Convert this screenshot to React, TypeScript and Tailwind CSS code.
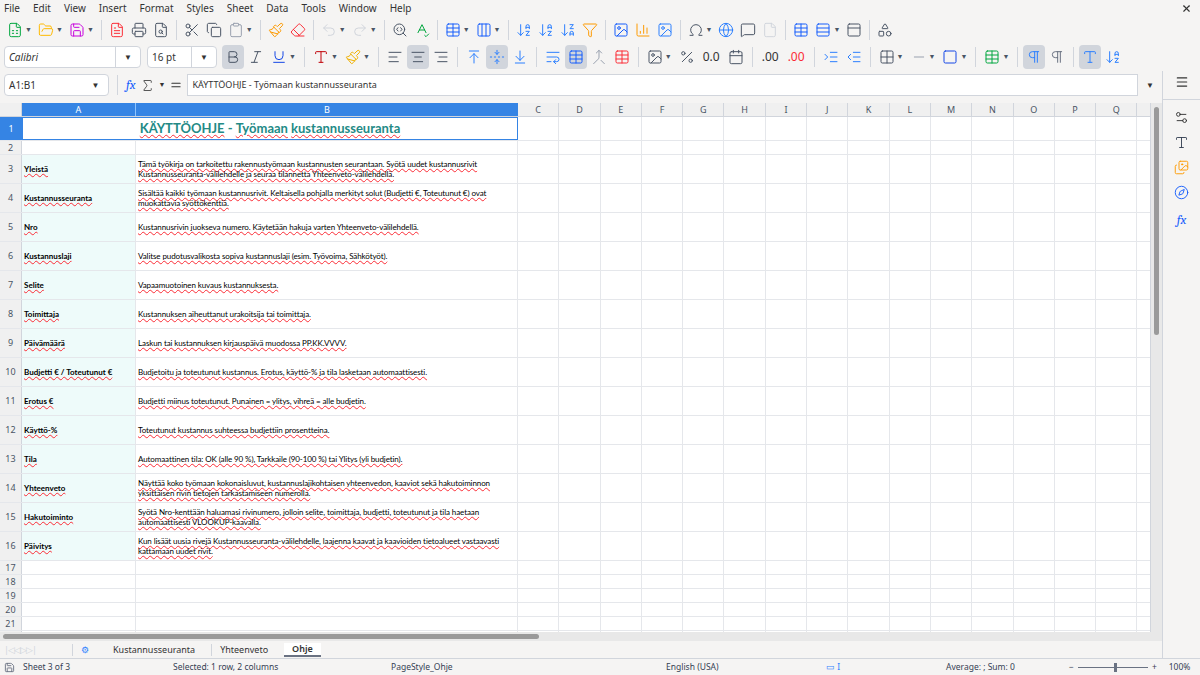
import React from "react";
import {
  FileSpreadsheet, FolderOpen, Save, FileText, Printer, FileSearch, Scissors, Copy, Clipboard, Paintbrush, Eraser,
  Undo2, Redo2, SearchCode, SpellCheck, Table, Columns3, ArrowDownAZ, ArrowDownZA, Filter, Image, BarChart3, Omega,
  Globe, MessageSquare, File, Rows3, PanelTop, Shapes, Bold, Italic, Underline, AlignLeft, AlignCenter,
  AlignRight, ArrowUpToLine, FoldVertical, ArrowDownToLine, WrapText, Merge, Percent, Calendar, IndentIncrease,
  IndentDecrease, Grid2x2, Minus, Square, Pilcrow, Menu, Settings2, Type, Images, Compass, X, Sigma, Equal,
} from "lucide-react";

const ui = { fontFamily: '"Noto Sans","Open Sans",sans-serif' };
const cell = { fontFamily: 'Lato,"Liberation Sans",sans-serif' };

const I = ({ C, c = "text-gray-600", dd = false }: { C: any; c?: string; dd?: boolean }) => (
  <div className="flex items-center h-6 px-[3px]">
    <C size={16} strokeWidth={1.5} className={c} />
    {dd && <span className="text-[7px] text-gray-600 ml-[2px]">▼</span>}
  </div>
);
const Sep = () => <div className="w-px h-5 bg-gray-300 mx-1" />;

const rows: [string, string][] = [
  ["Yleistä", "Tämä työkirja on tarkoitettu rakennustyömaan kustannusten seurantaan. Syötä uudet kustannusrivit Kustannusseuranta-välilehdelle ja seuraa tilannetta Yhteenveto-välilehdellä."],
  ["Kustannusseuranta", "Sisältää kaikki työmaan kustannusrivit. Keltaisella pohjalla merkityt solut (Budjetti €, Toteutunut €) ovat muokattavia syöttökenttiä."],
  ["Nro", "Kustannusrivin juokseva numero. Käytetään hakuja varten Yhteenveto-välilehdellä."],
  ["Kustannuslaji", "Valitse pudotusvalikosta sopiva kustannuslaji (esim. Työvoima, Sähkötyöt)."],
  ["Selite", "Vapaamuotoinen kuvaus kustannuksesta."],
  ["Toimittaja", "Kustannuksen aiheuttanut urakoitsija tai toimittaja."],
  ["Päivämäärä", "Laskun tai kustannuksen kirjauspäivä muodossa PP.KK.VVVV."],
  ["Budjetti € / Toteutunut €", "Budjetoitu ja toteutunut kustannus. Erotus, käyttö-% ja tila lasketaan automaattisesti."],
  ["Erotus €", "Budjetti miinus toteutunut. Punainen = ylitys, vihreä = alle budjetin."],
  ["Käyttö-%", "Toteutunut kustannus suhteessa budjettiin prosentteina."],
  ["Tila", "Automaattinen tila: OK (alle 90 %), Tarkkaile (90-100 %) tai Ylitys (yli budjetin)."],
  ["Yhteenveto", "Näyttää koko työmaan kokonaisluvut, kustannuslajikohtaisen yhteenvedon, kaaviot sekä hakutoiminnon yksittäisen rivin tietojen tarkastamiseen numerolla."],
  ["Hakutoiminto", "Syötä Nro-kenttään haluamasi rivinumero, jolloin selite, toimittaja, budjetti, toteutunut ja tila haetaan automaattisesti VLOOKUP-kaavalla."],
  ["Päivitys", "Kun lisäät uusia rivejä Kustannusseuranta-välilehdelle, laajenna kaavat ja kaavioiden tietoalueet vastaavasti kattamaan uudet rivit."],
];
const cols = "CDEFGHIJKLMNOPQ".split("");
const W = "underline decoration-wavy decoration-red-500 decoration-[0.5px] underline-offset-[1px]";

function Grid({ h }: { h: number }) {
  return (
    <>
      {cols.map((c) => (
        <div key={c} className="w-[41.3px] shrink-0 border-r border-gray-200 bg-white" style={{ height: h }} />
      ))}
    </>
  );
}

export default function App() {
  return (
    <div className="w-[1200px] h-[675px] bg-[#f5f4f3] flex flex-col overflow-hidden text-[#333]" style={ui}>
      <div className="h-[17px] flex items-center text-[10px] px-1 gap-[13px] relative">
        {["File", "Edit", "View", "Insert", "Format", "Styles", "Sheet", "Data", "Tools", "Window", "Help"].map((m) => (
          <span key={m}>{m}</span>
        ))}
        <X size={11} className="absolute right-[8px] top-[3px]" strokeWidth={2.5} />
      </div>
      <div className="h-[26px] flex items-center px-1">
        <I C={FileSpreadsheet} c="text-green-600" dd /><I C={FolderOpen} c="text-amber-400" dd /><I C={Save} c="text-fuchsia-600" dd />
        <Sep /><I C={FileText} c="text-red-500" /><I C={Printer} /><I C={FileSearch} /><Sep />
        <I C={Scissors} /><I C={Copy} /><I C={Clipboard} c="text-gray-400" dd /><Sep />
        <I C={Paintbrush} c="text-amber-500" /><I C={Eraser} c="text-red-500" /><Sep />
        <I C={Undo2} c="text-gray-300" dd /><I C={Redo2} c="text-gray-300" dd /><Sep />
        <I C={SearchCode} /><I C={SpellCheck} c="text-green-600" /><Sep />
        <I C={Table} c="text-blue-600" dd /><I C={Columns3} c="text-blue-600" dd /><Sep />
        <I C={ArrowDownAZ} c="text-blue-500" /><I C={ArrowDownAZ} c="text-blue-500" /><I C={ArrowDownZA} c="text-blue-500" /><I C={Filter} c="text-amber-500" /><Sep />
        <I C={Image} c="text-blue-600" /><I C={BarChart3} c="text-amber-500" /><I C={Image} c="text-blue-500" /><Sep />
        <I C={Omega} dd /><I C={Globe} c="text-blue-500" /><I C={MessageSquare} /><I C={File} c="text-gray-300" /><Sep />
        <I C={Table} c="text-blue-600" /><I C={Rows3} c="text-blue-600" dd /><I C={PanelTop} /><Sep /><I C={Shapes} />
      </div>
      <div className="h-[28px] flex items-center px-1 gap-[1px]">
        <div className="w-[137px] h-[22px] bg-white border border-gray-300 rounded-sm flex items-center text-[10px] italic">
          <span className="flex-1 px-1">Calibri</span><div className="w-[25px] h-full border-l border-gray-300 flex items-center justify-center text-[8px] not-italic">▼</div>
        </div>
        <div className="w-[70px] ml-[5px] h-[22px] bg-white border border-gray-300 rounded-sm flex items-center text-[10px]">
          <span className="flex-1 px-1">16 pt</span><div className="w-[25px] h-full border-l border-gray-300 flex items-center justify-center text-[8px]">▼</div>
        </div>
        <div className="bg-gray-300 rounded ml-1"><I C={Bold} /></div><I C={Italic} /><I C={Underline} c="text-blue-700" dd /><Sep />
        <I C={Type} c="text-red-700" dd /><I C={Paintbrush} c="text-yellow-500" dd /><Sep />
        <I C={AlignLeft} /><div className="bg-gray-300 rounded"><I C={AlignCenter} /></div><I C={AlignRight} /><Sep />
        <I C={ArrowUpToLine} c="text-blue-500" /><div className="bg-gray-300 rounded"><I C={FoldVertical} c="text-blue-500" /></div><I C={ArrowDownToLine} c="text-blue-500" /><Sep />
        <I C={WrapText} c="text-blue-500" /><div className="bg-gray-300 rounded"><I C={Table} c="text-blue-600" /></div><I C={Merge} c="text-gray-400" /><I C={Table} c="text-red-500" /><Sep />
        <I C={Image} dd /><I C={Percent} /><span className="text-[12px] px-1">0.0</span><I C={Calendar} /><Sep />
        <span className="text-[12px] px-1">.00</span><span className="text-[12px] px-1 text-red-500">.00</span><Sep />
        <I C={IndentIncrease} c="text-blue-500" /><I C={IndentDecrease} c="text-blue-500" /><Sep />
        <I C={Grid2x2} dd /><I C={Minus} c="text-gray-400" dd /><I C={Square} c="text-blue-700" dd /><Sep />
        <I C={Table} c="text-green-600" dd /><Sep />
        <div className="bg-gray-300 rounded"><I C={Pilcrow} c="text-blue-500" /></div><I C={Pilcrow} c="text-gray-500" /><Sep />
        <div className="bg-gray-300 rounded"><I C={Type} c="text-blue-500" /></div><I C={ArrowDownAZ} c="text-blue-500" />
      </div>
      <div className="flex flex-1 min-h-0">
        <div className="flex-1 flex flex-col min-w-0">
          <div className="h-[28px] flex items-center px-1 gap-1">
            <div className="w-[105px] h-[22px] bg-white border border-gray-300 rounded-sm flex items-center text-[10px]">
              <span className="flex-1 px-1">A1:B1</span><div className="w-[25px] h-full flex items-center justify-center text-[8px]">▼</div>
            </div>
            <Sep />
            <span className="italic text-blue-600 text-[13px] font-serif">fx</span>
            <Sigma size={15} strokeWidth={1.3} /><span className="text-[7px]">▼</span><Equal size={14} />
            <div className="flex-1 h-[22px] bg-white border border-gray-300 flex items-center text-[9px] px-1">KÄYTTÖOHJE - Työmaan kustannusseuranta</div>
            <span className="text-[8px] px-1">▼</span>
          </div>
          <div className="flex-1 flex min-h-0 mt-[4px]">
            <div className="flex-1 flex flex-col bg-white min-w-0 overflow-hidden" style={cell}>
              <div className="h-[14px] shrink-0 flex text-[9px] text-gray-600 bg-[#f0f0f0] border-b border-gray-300" style={ui}>
                <div className="w-[22px] shrink-0 border-r border-gray-300" />
                <div className="w-[114px] shrink-0 bg-[#3584e4] text-white flex items-center justify-center border-r border-blue-300">A</div>
                <div className="w-[382px] shrink-0 bg-[#3584e4] text-white flex items-center justify-center">B</div>
                {cols.map((c) => (
                  <div key={c} className="w-[41.3px] shrink-0 border-r border-gray-300 flex items-center justify-center">{c}</div>
                ))}
              </div>
              <div className="flex h-[24px] shrink-0 border-b border-gray-200">
                <div className="w-[22px] shrink-0 bg-[#3584e4] text-white text-[9px] flex items-center justify-center" style={ui}>1</div>
                <div className="w-[496px] shrink-0 border border-[#3584e4] flex items-center justify-center text-[13px] font-bold text-[#238a86]">
                  <span className={W}>KÄYTTÖOHJE</span>&nbsp;-&nbsp;<span className={W}>Työmaan</span>&nbsp;<span className={W}>kustannusseuranta</span>
                </div>
                <Grid h={23} />
              </div>
              <div className="flex h-[14px] shrink-0 border-b border-gray-200">
                <div className="w-[22px] shrink-0 bg-[#f0f0f0] border-r border-gray-300 text-[9px] text-gray-600 flex items-center justify-center" style={ui}>2</div>
                <div className="w-[114px] shrink-0 border-r border-gray-200" />
                <div className="w-[382px] shrink-0 border-r border-gray-200" />
                <Grid h={13} />
              </div>
              {rows.map(([a, b], i) => (
                <div key={i} className="flex h-[29px] shrink-0 border-b border-gray-200">
                  <div className="w-[22px] shrink-0 bg-[#f0f0f0] border-r border-gray-300 text-[9px] text-gray-600 flex items-center justify-center" style={ui}>{i + 3}</div>
                  <div className="w-[114px] shrink-0 border-r border-gray-200 bg-[#eefbfa] flex items-center px-[2px] text-[8px] font-bold text-black">
                    <span className={W}>{a}</span>
                  </div>
                  <div className="w-[382px] shrink-0 border-r border-gray-200 flex items-center px-[2px] text-[8px] leading-[10px] tracking-[-0.1px] text-black">
                    <span className={W}>{b}</span>
                  </div>
                  <Grid h={28} />
                </div>
              ))}
              {[17, 18, 19, 20, 21, 22].map((r) => (
                <div key={r} className="flex h-[14px] border-b border-gray-200 shrink-0">
                  <div className="w-[22px] shrink-0 bg-[#f0f0f0] border-r border-gray-300 text-[9px] text-gray-600 flex items-center justify-center" style={ui}>{r}</div>
                  <div className="w-[114px] shrink-0 border-r border-gray-200" />
                  <div className="w-[382px] shrink-0 border-r border-gray-200" />
                  <Grid h={13} />
                </div>
              ))}
            </div>
            <div className="w-[12px] bg-[#e8e8e8] flex justify-center pt-[4px] border-l border-gray-300">
              <div className="w-[5px] h-[228px] bg-[#9a9a9a] rounded" />
            </div>
          </div>
          <div className="h-[9px] bg-[#e8e8e8] flex items-center px-[3px]">
            <div className="w-[536px] h-[5px] bg-[#9a9a9a] rounded" />
          </div>
          <div className="h-[17px] flex items-center text-[9px] leading-[12px] px-1 gap-2">
            <span className="text-gray-300 tracking-[-1px] w-[60px]">|◁◁▷▷|</span>
            <span className="text-blue-500 px-2 border-l border-gray-300">⚙</span>
            <span className="px-2">Kustannusseuranta</span>
            <span className="px-2 border-l border-gray-300">Yhteenveto</span>
            <span className="px-2 bg-white font-semibold border-b-2 border-gray-500">Ohje</span>
          </div>
        </div>
        <div className="w-[38px] flex flex-col items-center gap-[10px] pt-[4px] border-l border-gray-300">
          <Menu size={14} />
          <div className="w-full h-px bg-gray-300" />
          <Settings2 size={15} strokeWidth={1.5} />
          <Type size={15} strokeWidth={1.5} className="text-gray-700" />
          <Images size={15} strokeWidth={1.5} className="text-amber-500" />
          <Compass size={15} strokeWidth={1.5} className="text-blue-600" />
          <span className="italic text-blue-600 text-[13px] font-serif">fx</span>
        </div>
      </div>
      <div className="h-[17px] flex items-center text-[8.5px] text-gray-700 px-1 border-t border-gray-300">
        <Save size={11} className="text-gray-500" />
        <span className="w-[150px] ml-2">Sheet 3 of 3</span>
        <span className="w-[218px]">Selected: 1 row, 2 columns</span>
        <span className="w-[275px]">PageStyle_Ohje</span>
        <span className="w-[160px]">English (USA)</span>
        <span className="w-[120px] text-blue-500">▭ I</span>
        <span className="w-[123px]">Average: ; Sum: 0</span>
        <span>−</span>
        <div className="w-[70px] h-px bg-gray-500 mx-1 relative"><div className="absolute left-[36px] -top-[4px] w-[3px] h-[9px] bg-gray-500" /></div>
        <span>+</span><span className="ml-3">100%</span>
      </div>
    </div>
  );
}
